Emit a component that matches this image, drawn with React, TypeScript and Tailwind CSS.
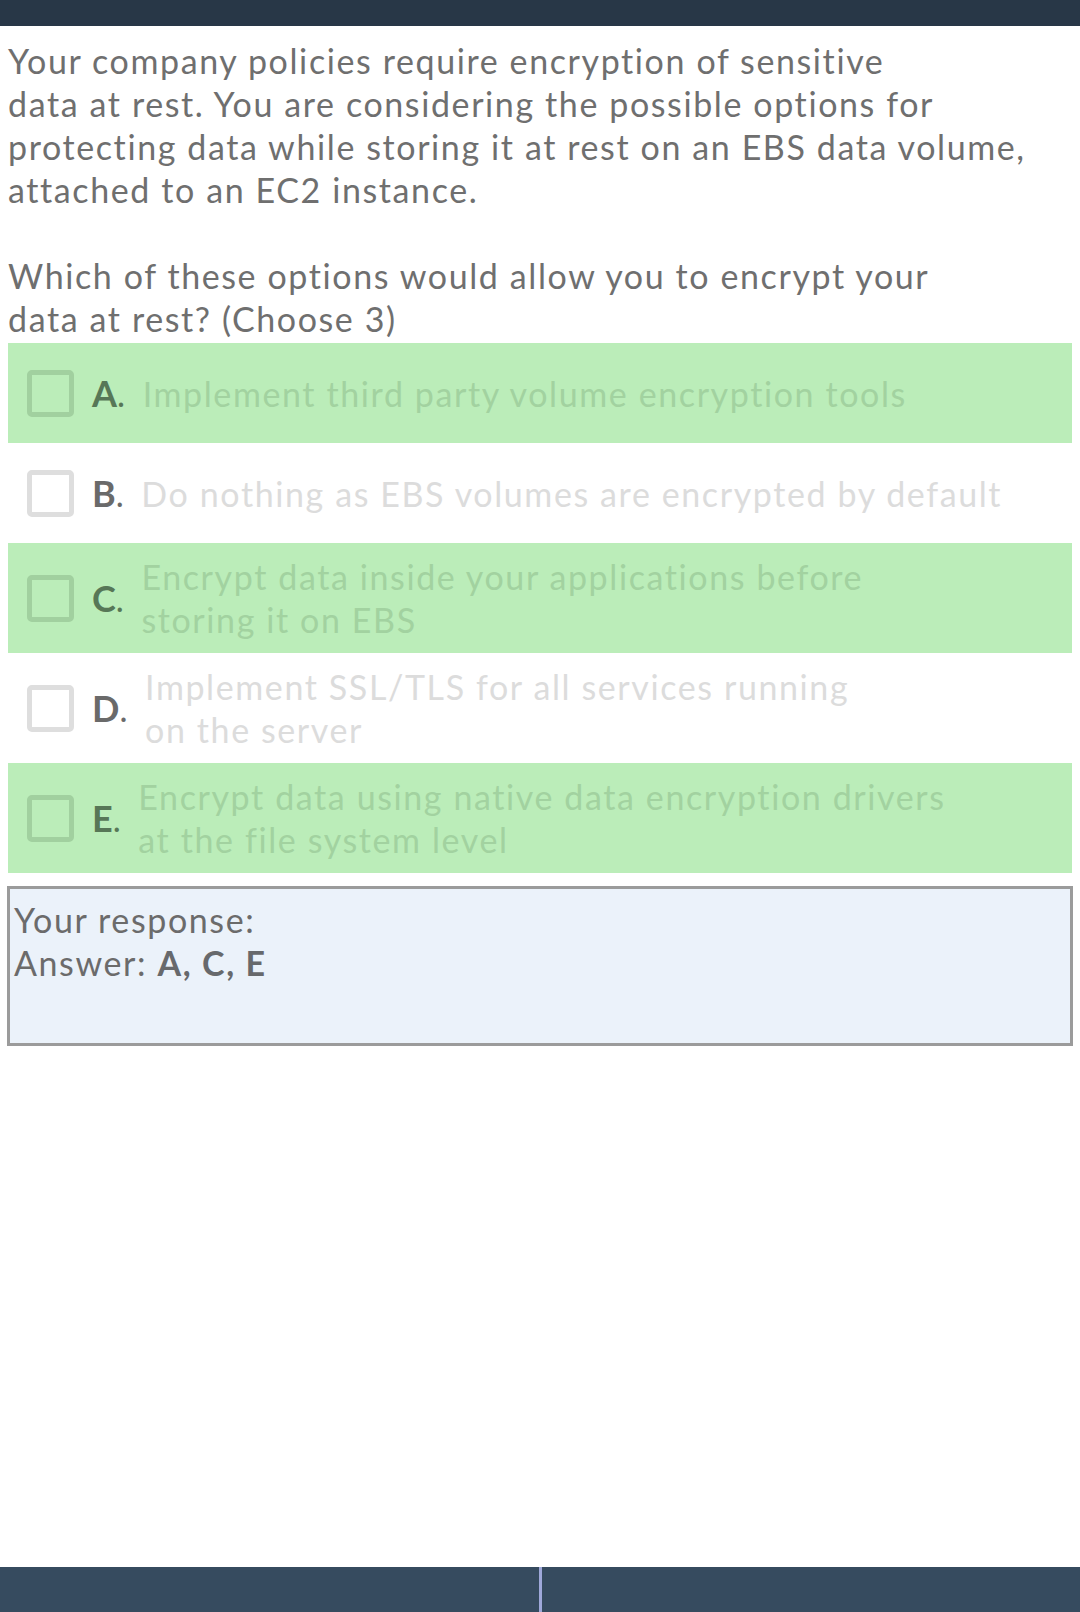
import React from "react";

type Option = {
	id: string;
	lines: string[];
	correct: boolean;
};

const options: Option[] = [
	{ id: "A", lines: ["Implement third party volume encryption tools"], correct: true },
	{ id: "B", lines: ["Do nothing as EBS volumes are encrypted by default"], correct: false },
	{ id: "C", lines: ["Encrypt data inside your applications before", "storing it on EBS"], correct: true },
	{ id: "D", lines: ["Implement SSL/TLS for all services running", "on the server"], correct: false },
	{ id: "E", lines: ["Encrypt data using native data encryption drivers", "at the file system level"], correct: true },
];

const question = [
	"Your company policies require encryption of sensitive",
	"data at rest. You are considering the possible options for",
	"protecting data while storing it at rest on an EBS data volume,",
	"attached to an EC2 instance.",
	"",
	"Which of these options would allow you to encrypt your",
	"data at rest? (Choose 3)",
];

function OptionRow({ option }: { option: Option }) {
	const { id, lines, correct } = option;
	return (
		<div
			className={`flex min-h-[100px] items-center py-3 ${
				correct ? "bg-[#bbedb9]" : "bg-white"
			}`}
		>
			{/* checkbox */}
			<div
				className={`ml-[19px] h-[47px] w-[47px] shrink-0 rounded-[5px] border-[5px] ${
					correct ? "border-[#a1d09f]" : "border-[#dedede]"
				}`}
			/>
			<div
				className={`ml-[18px] flex shrink-0 items-baseline ${
					correct ? "text-[#577757]" : "text-[#6a6a6a]"
				}`}
			>
				<span className="text-[36px] font-bold leading-[43px] tracking-normal">{id}</span>
				<span className="text-[34px] leading-[43px]">.</span>
			</div>
			<div
				className={`ml-[16px] whitespace-nowrap text-[34px] leading-[43px] ${
					correct ? "text-[#a2d2a0]" : "text-[#dcdcdc]"
				}`}
			>
				{lines.map((line) => (
					<div key={line}>{line}</div>
				))}
			</div>
		</div>
	);
}

export default function App() {
	return (
		<div className="flex h-[1612px] flex-col bg-white font-['Lato','Noto_Sans',sans-serif] tracking-[1.6px] text-[#6f6f6f]">
			{/* top bar */}
			<div className="h-[26px] shrink-0 bg-[#283747]" />

			<div className="flex-1 overflow-hidden">
				{/* question */}
				<div className="whitespace-nowrap px-2 pt-[13px] text-[34px] leading-[43px]">
					{question.map((line, i) => (
						<div key={i} className="h-[43px]">
							{line}
						</div>
					))}
				</div>

				{/* options */}
				<div className="mx-2 mt-[3px] flex flex-col">
					{options.map((o) => (
						<OptionRow key={o.id} option={o} />
					))}
				</div>

				{/* response */}
				<div className="mx-[7px] mt-[13px] h-[160px] border-[3px] border-[#9b9b9b] bg-[#ebf2fa] px-[4px] pt-[9px] text-[34px] leading-[43px] text-[#6b6b6b]">
					<div>Your response:</div>
					<div>
						Answer: <span className="font-bold text-[#67696c]">A, C, E</span>
					</div>
				</div>
			</div>

			{/* bottom bar */}
			<div className="flex h-[45px] shrink-0 bg-[#364b5f]">
				<div className="flex-1" />
				<div className="w-[3px] bg-[#9fa8da]" />
				<div className="flex-1" />
			</div>
		</div>
	);
}
